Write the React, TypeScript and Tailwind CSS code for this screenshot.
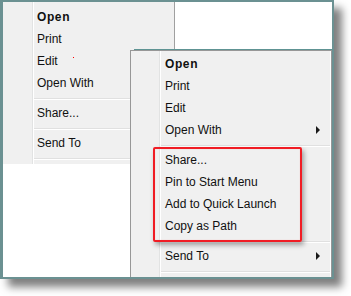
import React from "react";

type Item = { label: string; bold?: boolean; sub?: boolean } | "sep";

const firstItems: Item[] = [
  { label: "Open", bold: true },
  { label: "Print" },
  { label: "Edit" },
  { label: "Open With" },
  "sep",
  { label: "Share..." },
  "sep",
  { label: "Send To" },
  "sep",
  { label: "" },
];

const secondItems: Item[] = [
  { label: "Open", bold: true },
  { label: "Print" },
  { label: "Edit" },
  { label: "Open With", sub: true },
  "sep",
  { label: "Share..." },
  { label: "Pin to Start Menu" },
  { label: "Add to Quick Launch" },
  { label: "Copy as Path" },
  "sep",
  { label: "Send To", sub: true },
  "sep",
];

const MenuRows = ({ items, indent }: { items: Item[]; indent: string }) => (
  <>
    {items.map((item, i) =>
      item === "sep" ? (
        <div key={i} className="h-[8px] pt-[4px]">
          <div className="h-px bg-[#e0e0e0]"></div>
          <div className="h-px bg-white"></div>
        </div>
      ) : (
        <div
          key={i}
          className={`h-[22px] flex items-center justify-between pr-[10px] ${indent}`}
        >
          <span className={item.bold ? "font-bold tracking-[0.6px]" : ""}>
            {item.label}
          </span>
          {item.sub && (
            <span className="w-0 h-0 border-y-[4px] border-y-transparent border-l-[4px] border-l-[#1a1a1a]"></span>
          )}
        </div>
      )
    )}
  </>
);

const App = () => {
  return (
    <div className="w-[351px] h-[296px] bg-white font-['Liberation_Sans',Arial,sans-serif] text-[12px] text-[#111] leading-none">
      <div className="relative w-[334px] h-[279px] bg-white border-[#6b9192] border-l-[3px] border-t-2 border-r-2 border-b-2 shadow-[8px_8px_8px_rgba(0,0,0,0.5)]">
        {/* menu behind */}
        <div className="w-[172px] h-[162px] bg-[#f0f0f0] border-r border-[#a0a0a0] flex overflow-hidden">
          <div className="w-[30px] border-r border-[#e2e3e3]"></div>
          <div className="flex-1 border-l border-white pt-[4px]">
            <MenuRows items={firstItems} indent="pl-[3px]" />
          </div>
        </div>
        <div className="absolute left-[70px] top-[55px] w-px h-px bg-[#ff0000]"></div>

        {/* menu in front */}
        <div className="absolute left-[127px] top-[47px] right-0 bottom-0 flex flex-col">
          <div className="ml-[4px] h-px bg-[#5e9393]"></div>
          <div className="flex-1 bg-[#f0f0f0] border-l border-t border-r border-[#979797] flex overflow-hidden">
            <div className="w-[29px] border-r border-[#e2e3e3]"></div>
            <div className="flex-1 border-l border-r border-white pt-[2px]">
              <MenuRows items={secondItems} indent="pl-[4px]" />
            </div>
          </div>
        </div>

        {/* highlight */}
        <div className="absolute left-[150px] top-[145px] w-[149px] h-[95px] rounded-[2px] border-2 border-[#f01c24] shadow-[2px_3px_5px_rgba(0,0,0,0.35),inset_0_0_1px_rgba(255,120,120,0.6)]"></div>
      </div>
    </div>
  );
};

export default App;
